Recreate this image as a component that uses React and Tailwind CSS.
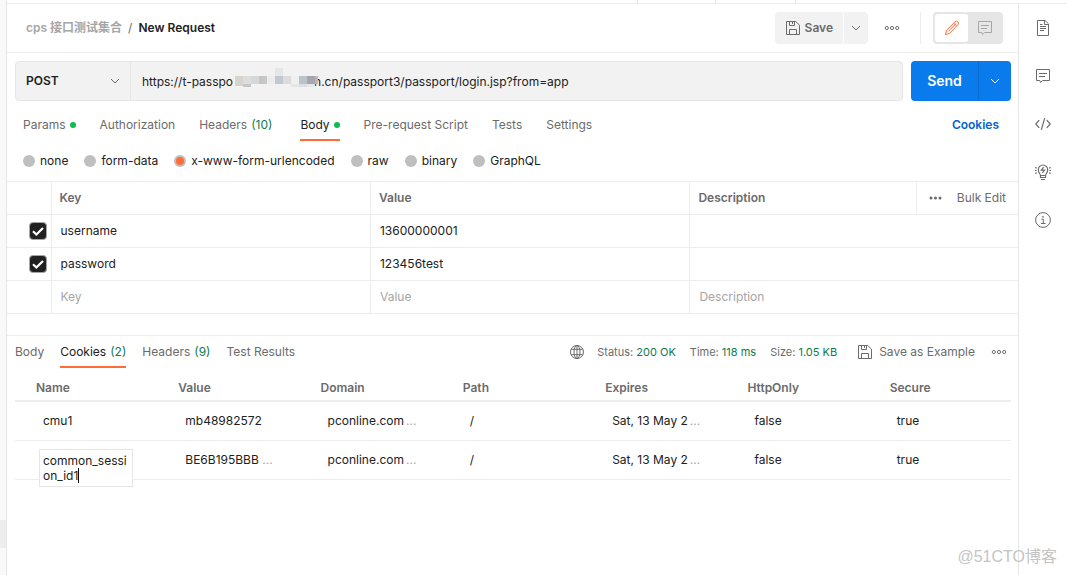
import { useState } from 'react';

const requestTabs = [
  { name: 'Params', dot: true },
  { name: 'Authorization' },
  { name: 'Headers', count: 10, className: 'mr-1' },
  { name: 'Body', dot: true },
  { name: 'Pre-request Script' },
  { name: 'Tests' },
  { name: 'Settings' },
];

const bodyTypes = ['none', 'form-data', 'x-www-form-urlencoded', 'raw', 'binary', 'GraphQL'];

const formRows = [
  { key: 'username', value: '13600000001' },
  { key: 'password', value: '123456test' },
];

const responseTabs = [
  { name: 'Body' },
  { name: 'Cookies', count: 2 },
  { name: 'Headers', count: 9 },
  { name: 'Test Results' },
];

const cookieColumns = ['Name', 'Value', 'Domain', 'Path', 'Expires', 'HttpOnly', 'Secure'];

const cookies = [
  ['cmu1', 'mb48982572', 'pconline.com...', '/', 'Sat, 13 May 2...', 'false', 'true'],
  ['common_session_id1', 'BE6B195BBB...', 'pconline.com...', '/', 'Sat, 13 May 2...', 'false', 'true'],
];

// x, y, width, height, fill
const mosaic = [
  [0, 8, 8, 10, '#d6d4cc'],
  [8, 8, 8, 8, '#dedddb'],
  [8, 16, 8, 3, '#c2c8c9'],
  [16, 8, 8, 8, '#d5d8da'],
  [24, 8, 8, 8, '#c5c7c7'],
  [32, 8, 8, 8, '#ececec'],
  [40, 0, 8, 8, '#e5e7e7'],
  [40, 8, 8, 8, '#bfcacf'],
  [48, 8, 8, 8, '#dfdbdc'],
  [56, 8, 8, 8, '#efefef'],
  [56, 16, 8, 3, '#e6e6e6'],
  [64, 8, 8, 8, '#b9c3cc'],
  [64, 16, 8, 3, '#dcdfe2'],
  [72, 8, 8, 8, '#a6a7ae'],
  [72, 16, 8, 3, '#e8e8e8'],
  [80, 8, 3, 8, '#c3b3c0'],
];

function Icon({ size = 16, className = '', children }) {
  return (
    <svg
      width={size}
      height={size}
      viewBox="0 0 16 16"
      fill="none"
      stroke="currentColor"
      className={`shrink-0 ${className}`}
      aria-hidden="true"
    >
      {children}
    </svg>
  );
}

function ChevronIcon({ className }) {
  return (
    <Icon className={className}>
      <path d="M4 6l4 4 4-4" />
    </Icon>
  );
}

function SaveIcon() {
  return (
    <Icon>
      <path d="M1.5 1.5h9.3l3.7 3.7v9.3h-13z" strokeLinejoin="round" />
      <path d="M4.5 1.5v4h5v-4M7.5 2v2M4.5 14.5v-5h7v5" />
    </Icon>
  );
}

function MoreIcon() {
  return (
    <Icon>
      <circle cx="2.8" cy="8" r="1.6" />
      <circle cx="8" cy="8" r="1.6" />
      <circle cx="13.2" cy="8" r="1.6" />
    </Icon>
  );
}

function CommentIcon() {
  return (
    <Icon>
      <path d="M1.5 1.5h13v11H7.6l-2 2-.8-2H1.5z" strokeLinejoin="round" />
      <path d="M4 5.5h8M4 8.5h6" />
    </Icon>
  );
}

function PencilIcon() {
  return (
    <Icon className="text-[#ff6c37]">
      <path d="M1.5 14.5l1-4.2L11 1.9a1.9 1.9 0 0 1 2.9 2.8L5.5 13.4zM9.8 3.2l2.8 2.8M12 3.6L4.4 11.4" strokeLinejoin="round" />
    </Icon>
  );
}

function DocIcon() {
  return (
    <Icon>
      <path d="M2.5.5h7.6l3.4 3.4v11.6h-11zM9.5.5v4h4" strokeLinejoin="round" />
      <path d="M5 4.5h2.5M5 6.5h6M5 8.5h6M5 10.5h4" />
    </Icon>
  );
}

function CodeIcon() {
  return (
    <Icon>
      <path d="M4.2 4.2L.8 8l3.4 3.8M11.8 4.2L15.2 8l-3.4 3.8M9.7 2.2L6.3 13.8" strokeWidth="1.2" />
    </Icon>
  );
}

function BulbIcon() {
  return (
    <Icon>
      <path d="M5.5 11.5C5.5 10 3.3 9 3.3 5.7a4.7 4.7 0 0 1 9.4 0c0 3.3-2.2 4.3-2.2 5.8zM5.5 11.5v2h5v-2M6 15.5h4" strokeWidth="1.2" />
      <path d="M8.6 3.2L6.3 6.2h3.2L7.4 9M.2 3.5l1.6.6M0 6.5h1.6M.2 9.5l1.6-.6M15.8 3.5l-1.6.6M16 6.5h-1.6M15.8 9.5l-1.6-.6" strokeWidth="1.2" />
    </Icon>
  );
}

function InfoIcon() {
  return (
    <Icon>
      <circle cx="8" cy="8" r="7.4" />
      <path d="M6.3 7.2h2v4.3M6 11.5h4.5" />
      <path d="M7.3 4.7h1.4" strokeWidth="1.4" />
    </Icon>
  );
}

function GlobeIcon() {
  return (
    <Icon>
      <circle cx="8" cy="8" r="6.5" />
      <ellipse cx="8" cy="8" rx="3" ry="6.5" />
      <path d="M2.2 5.3h11.6M2.2 10.7h11.6M8 1.5v13" />
    </Icon>
  );
}

function Tab({ tab, active, onClick }) {
  return (
    <button
      type="button"
      onClick={onClick}
      className={`flex h-8 items-center border-b-2 pt-0.5 ${tab.className || ''} ${
        active ? 'border-[#ff6c37] text-[#212121]' : 'border-transparent text-[#6b6b6b]'
      }`}
    >
      {tab.name}
      {tab.count && <span className="ml-1 text-[#0e7a4e]">({tab.count})</span>}
      {tab.dot && <span className="ml-1 size-1.5 rounded-full bg-[#0cbb52]" />}
    </button>
  );
}

function Header() {
  return (
    <header className="flex h-[49px] items-center border-b border-[#ededed] pr-[15px] pl-[19px]">
      <nav className="flex flex-1 gap-1.5 font-semibold text-[#a6a6a6]">
        <a href="#collection">cps 接口测试集合</a>
        <span className="font-normal text-[#6b6b6b]">/</span>
        <span className="text-[#212121]">New Request</span>
      </nav>
      <div className="flex items-center text-[#6b6b6b]">
        <button type="button" className="flex h-8 items-center gap-1 rounded-l bg-[#f2f2f2] px-2.5 font-semibold">
          <SaveIcon />
          Save
        </button>
        <button type="button" aria-label="Save options" className="ml-px flex h-8 w-6 items-center justify-center rounded-r bg-[#f2f2f2]">
          <ChevronIcon />
        </button>
        <button type="button" aria-label="More actions" className="ml-4">
          <MoreIcon />
        </button>
        <div className="ml-5 h-8 w-px bg-[#ededed]" />
        <div className="ml-3 flex h-8 w-[70px] rounded bg-[#e6e6e6] p-0.5">
          <button type="button" aria-label="Edit" className="flex flex-1 items-center justify-center rounded-[3px] bg-white">
            <PencilIcon />
          </button>
          <button type="button" aria-label="Comments" className="flex flex-1 items-center justify-center text-[#a6a6a6]">
            <CommentIcon />
          </button>
        </div>
      </div>
    </header>
  );
}

function UrlBar() {
  const [method, setMethod] = useState('POST');
  const [url, setUrl] = useState(
    `https://t-passpo${' '.repeat(24)}n.cn/passport3/passport/login.jsp?from=app`
  );

  return (
    <div className="flex gap-2 pt-2 pr-[7px] pl-2">
      <div className="flex h-10 flex-1 rounded border border-[#e6e6e6] bg-[#f2f2f2]">
        <div className="relative w-[115px] border-r border-[#e6e6e6]">
          <select
            aria-label="Method"
            value={method}
            onChange={(e) => setMethod(e.target.value)}
            className="size-full appearance-none pl-2.5 font-semibold text-[#212121] focus:outline-none"
          >
            <option>GET</option>
            <option>POST</option>
            <option>PUT</option>
          </select>
          <ChevronIcon className="pointer-events-none absolute top-[11px] right-[7px] text-[#6b6b6b]" />
        </div>
        <div className="relative flex-1">
          <input
            type="text"
            aria-label="Request URL"
            value={url}
            onChange={(e) => setUrl(e.target.value)}
            className="size-full px-[11px] text-[#212121] focus:outline-none"
          />
          <svg width="83" height="20" className="pointer-events-none absolute top-1.5 left-[104px]" aria-hidden="true">
            {mosaic.map(([x, y, w, h, fill]) => (
              <rect key={`${x}-${y}`} x={x} y={y} width={w} height={h} fill={fill} />
            ))}
          </svg>
        </div>
      </div>
      <div className="flex h-10 text-white">
        <button type="button" className="w-[67px] rounded-l bg-[#097bed] text-sm font-semibold">
          Send
        </button>
        <button type="button" aria-label="Send options" className="flex w-[33px] items-center justify-center rounded-r border-l border-[#0a6fd4] bg-[#097bed]">
          <ChevronIcon />
        </button>
      </div>
    </div>
  );
}

function BodyForm() {
  const cell = 'border border-[#ededed] px-2';
  const input = 'w-full pl-px placeholder:text-[#a6a6a6] focus:outline-none';

  return (
    <table className="w-full table-fixed border-collapse text-left text-[#212121]">
      <thead>
        <tr className="h-[33px] text-[#6b6b6b]">
          <th className={`${cell} w-11 border-l-0`} aria-label="Enabled" />
          <th className={`${cell} w-[31.6%] font-semibold`}>Key</th>
          <th className={`${cell} w-[31.6%] font-semibold`}>Value</th>
          <th className={`${cell} border-r-0 pr-0`}>
            <div className="flex items-center justify-between">
              <span className="font-semibold">Description</span>
              <div className="flex h-8 items-center gap-3.5 border-l border-[#ededed] pr-3 pl-2.5 font-normal">
                <button type="button" aria-label="Table options">
                  <svg width="16" height="4" fill="currentColor" aria-hidden="true">
                    <circle cx="4" cy="2" r="1.5" />
                    <circle cx="8.5" cy="2" r="1.5" />
                    <circle cx="13" cy="2" r="1.5" />
                  </svg>
                </button>
                <button type="button">Bulk Edit</button>
              </div>
            </div>
          </th>
        </tr>
      </thead>
      <tbody>
        {formRows.map((row) => (
          <tr key={row.key} className="h-[33px]">
            <td className={`${cell} border-l-0 pr-1`}>
              <label className="ml-auto grid size-[18px] place-items-center">
                <input
                  type="checkbox"
                  defaultChecked
                  aria-label={`Use ${row.key}`}
                  className="peer col-start-1 row-start-1 size-[18px] appearance-none rounded border border-[#a6a6a6] checked:bg-[#212121]"
                />
                <svg
                  width="14"
                  height="14"
                  viewBox="0 0 14 14"
                  fill="none"
                  stroke="white"
                  strokeWidth="2.2"
                  className="pointer-events-none invisible col-start-1 row-start-1 peer-checked:visible"
                >
                  <path d="M2 7.2l3.4 3.3L12 4" />
                </svg>
              </label>
            </td>
            <td className={cell}>
              <input type="text" aria-label="Key" defaultValue={row.key} className={input} />
            </td>
            <td className={cell}>
              <input type="text" aria-label="Value" defaultValue={row.value} className={input} />
            </td>
            <td className={`${cell} border-r-0`}>
              <input type="text" aria-label="Description" className={input} />
            </td>
          </tr>
        ))}
        <tr className="h-[33px]">
          <td className={`${cell} border-l-0`} />
          <td className={cell}>
            <input type="text" aria-label="New key" placeholder="Key" className={input} />
          </td>
          <td className={cell}>
            <input type="text" aria-label="New value" placeholder="Value" className={input} />
          </td>
          <td className={`${cell} border-r-0`}>
            <input type="text" aria-label="New description" placeholder="Description" className={input} />
          </td>
        </tr>
      </tbody>
    </table>
  );
}

function CookieCell({ text }) {
  if (!text.endsWith('...')) return text;
  return (
    <div className="flex gap-0.5 whitespace-nowrap">
      <span className="min-w-[75px]">{text.slice(0, -3)}</span>
      <span className="text-[#a6a6a6]">...</span>
    </div>
  );
}

function CookieTable() {
  return (
    <div className="pr-[7px] pl-2">
      <table className="w-full table-fixed border-collapse text-left">
        <thead>
          <tr className="h-[33px] border-b-2 border-[#ededed] text-[#6b6b6b]">
            {cookieColumns.map((name) => (
              <th key={name} className="pt-2 pl-[21px] font-semibold">{name}</th>
            ))}
          </tr>
        </thead>
        <tbody>
          {cookies.map((row, i) => (
            <tr key={row[0]} className="h-[39px] border-b border-[#ededed] text-[#212121]">
              {row.map((text, j) => (
                <td key={cookieColumns[j]} className="relative pl-7">
                  {i === 1 && j === 0 ? (
                    <div className="absolute top-2 left-6">
                      <textarea
                        aria-label="Cookie name"
                        defaultValue={text}
                        className="block h-[38px] w-[94px] resize-none overflow-hidden border border-[#e6e6e6] bg-white px-[3px] py-[3px] leading-[15px] break-all focus:outline-none"
                      />
                      <span className="absolute top-[19px] left-[39px] h-[15px] w-px bg-black" />
                    </div>
                  ) : (
                    <CookieCell text={text} />
                  )}
                </td>
              ))}
            </tr>
          ))}
        </tbody>
      </table>
    </div>
  );
}

function ResponseMeta() {
  return (
    <div className="flex h-8 items-center text-[#6b6b6b]">
      <GlobeIcon />
      <div className="ml-3 flex gap-3.5 text-[11px]">
        <span>Status: <span className="text-[#0e7a4e]">200 OK</span></span>
        <span>Time: <span className="text-[#0e7a4e]">118 ms</span></span>
        <span>Size: <span className="text-[#0e7a4e]">1.05 KB</span></span>
      </div>
      <button type="button" className="ml-5 flex items-center gap-1.5">
        <SaveIcon />
        Save as Example
      </button>
      <button type="button" aria-label="Response actions" className="ml-4">
        <MoreIcon />
      </button>
    </div>
  );
}

export default function App() {
  const [requestTab, setRequestTab] = useState('Body');
  const [responseTab, setResponseTab] = useState('Cookies');
  const [bodyType, setBodyType] = useState('x-www-form-urlencoded');

  return (
    <div className="relative flex min-h-screen bg-white font-['Inter','Noto_Sans_CJK_SC',sans-serif] text-xs">
      <div className="flex w-[7px] flex-col justify-end border-r border-[#e6e6e6] bg-[#f9f9f9] pb-[27px]">
        <div className="h-7 bg-[#ededed]" />
      </div>

      <div className="flex min-w-0 flex-1 flex-col">
        <div className="flex h-1 justify-end border-b border-[#ededed]">
          <div className="w-[79px] border-x border-[#e6e6e6]" />
          <div className="w-20 border-r border-[#e6e6e6]" />
          <div className="w-[271px]" />
        </div>

        <div className="flex flex-1">
          <main className="min-w-0 flex-1 border-r border-[#e6e6e6]">
            <Header />
            <UrlBar />

            <div className="flex items-start justify-between pt-2 pr-[19px] pl-4">
              <div className="flex gap-6">
                {requestTabs.map((tab) => (
                  <Tab
                    key={tab.name}
                    tab={tab}
                    active={tab.name === requestTab}
                    onClick={() => setRequestTab(tab.name)}
                  />
                ))}
              </div>
              <a href="#cookies" className="pt-2 font-semibold text-[#0265d2]">Cookies</a>
            </div>

            <div className="flex h-10 items-center gap-4 px-4 text-[#212121]">
              {bodyTypes.map((type) => (
                <label key={type} className="flex items-center gap-[5px]">
                  <input
                    type="radio"
                    name="bodyType"
                    checked={type === bodyType}
                    onChange={() => setBodyType(type)}
                    className="grid size-3 appearance-none place-items-center rounded-full bg-[#bfbfbf] before:size-2 before:rounded-full checked:before:bg-[#ff6c37]"
                  />
                  {type}
                </label>
              ))}
            </div>

            <BodyForm />

            <section className="mt-[21px] border-t border-[#ededed]">
              <div className="flex items-start justify-between pr-[11px] pl-2">
                <div className="flex gap-4">
                  {responseTabs.map((tab) => (
                    <Tab
                      key={tab.name}
                      tab={tab}
                      active={tab.name === responseTab}
                      onClick={() => setResponseTab(tab.name)}
                    />
                  ))}
                </div>
                <ResponseMeta />
              </div>
              <CookieTable />
            </section>
          </main>

          <aside className="flex w-12 flex-col items-center gap-8 pt-4 text-[#6b6b6b]">
            <button type="button" aria-label="Documentation"><DocIcon /></button>
            <button type="button" aria-label="Comments"><CommentIcon /></button>
            <button type="button" aria-label="Code"><CodeIcon /></button>
            <button type="button" aria-label="Related requests"><BulbIcon /></button>
            <button type="button" aria-label="Info"><InfoIcon /></button>
          </aside>
        </div>
      </div>

      <div className="absolute right-2.5 bottom-2 font-['Liberation_Sans','Noto_Sans_CJK_SC',sans-serif] text-base leading-5 text-[#c4c4c4]">
        @51CTO博客
      </div>
    </div>
  );
}
